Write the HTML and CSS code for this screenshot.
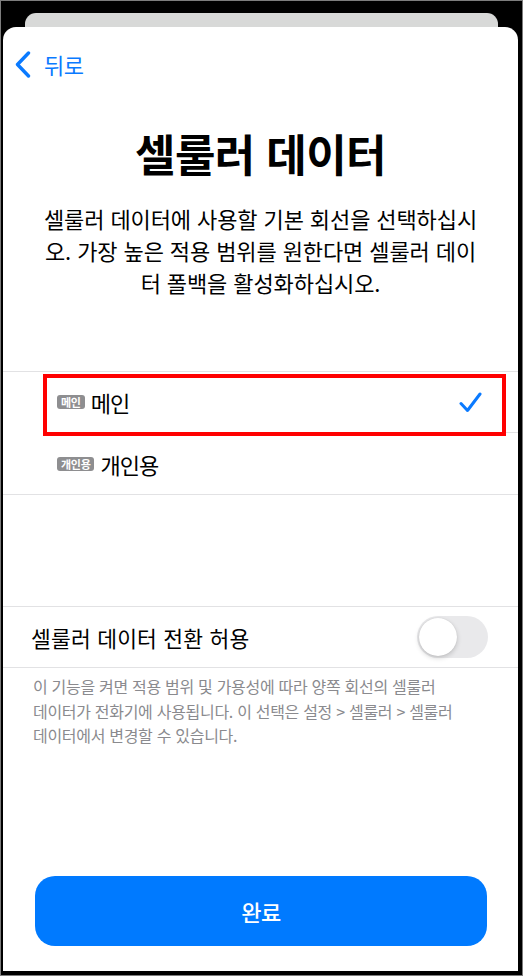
FILE: index.html
```html
<!DOCTYPE html>
<html lang="ko">
<head>
<meta charset="utf-8">
<link rel="stylesheet" href="styles.css">
</head>
<body>
<div class="frame">
  <div class="backcard"></div>
  <div class="sheet">
    <div class="nav">
      <svg class="chev" width="16" height="27" viewBox="0 0 16 27"><path d="M13.5 2 L2.5 13.5 L13.5 25" fill="none" stroke="#0a7aff" stroke-width="3.4" stroke-linecap="round" stroke-linejoin="round"/></svg>
      <span class="back">뒤로</span>
    </div>
    <h1 class="title">셀룰러 데이터</h1>
    <p class="desc">셀룰러 데이터에 사용할 기본 회선을 선택하십시<br>오. 가장 높은 적용 범위를 원한다면 셀룰러 데이<br>터 폴백을 활성화하십시오.</p>
    <div class="list">
      <div class="row">
        <div class="row-inner sep">
          <span class="badge">메인</span><span class="label">메인</span>
          <svg class="check" width="23" height="21" viewBox="0 0 23 21"><path d="M2 11.5 L8.5 18.5 L21 2" fill="none" stroke="#0a7aff" stroke-width="3" stroke-linecap="round" stroke-linejoin="round"/></svg>
        </div>
        <div class="highlight"></div>
      </div>
      <div class="row">
        <div class="row-inner">
          <span class="badge">개인용</span><span class="label">개인용</span>
        </div>
      </div>
    </div>
    <div class="toggle-row">
      <span class="toggle-label">셀룰러 데이터 전환 허용</span>
      <span class="switch"><span class="knob"></span></span>
    </div>
    <p class="note">이 기능을 켜면 적용 범위 및 가용성에 따라 양쪽 회선의 셀룰러<br>데이터가 전화기에 사용됩니다. 이 선택은 설정 &gt; 셀룰러 &gt; 셀룰러<br>데이터에서 변경할 수 있습니다.</p>
    <div class="done">완료</div>
  </div>
</div>
</body>
</html>
```
FILE: styles.css
```css
* { box-sizing: border-box; }
html, body { margin: 0; padding: 0; }
body {
  width: 523px;
  height: 976px;
  font-family: "Noto Sans CJK KR", "Noto Sans", sans-serif;
  background: #000;
}
.frame {
  width: 523px;
  height: 976px;
  border: 1px solid #7d7d7d;
  background: #000;
  padding: 12px 4px 4px 2px;
  display: flex;
  flex-direction: column;
}
.backcard {
  height: 14px;
  margin: 0 20px 0 22px;
  background: #d8d9d8;
  border-radius: 11px 11px 0 0;
  flex: none;
}
.sheet {
  flex: 1;
  background: #fff;
  border-radius: 13px 13px 0 0;
  display: flex;
  flex-direction: column;
}
.nav {
  height: 74px;
  display: flex;
  align-items: center;
  padding-left: 12px;
  flex: none;
}
.chev { display: block; }
.back {
  margin-left: 13px;
  font-size: 22px;
  color: #0a7aff;
  letter-spacing: -0.6px;
  line-height: 1;
}
.title {
  margin: 26px 0 0;
  font-size: 44px;
  line-height: 52px;
  font-weight: 700;
  text-align: center;
  letter-spacing: -0.6px;
  color: #000;
}
.desc {
  margin: 23px 0 0;
  font-size: 22px;
  line-height: 32px;
  text-align: center;
  letter-spacing: -0.1px;
  color: #000;
}
.list {
  margin-top: 73px;
  border-top: 1px solid #e2e2e4;
  border-bottom: 1px solid #e2e2e4;
}
.row {
  position: relative;
  padding-left: 54px;
}
.row-inner {
  height: 61px;
  display: flex;
  align-items: center;
  padding-right: 36px;
}
.row-inner.sep { border-bottom: 1px solid #e2e2e4; }
.badge {
  display: inline-block;
  height: 14px;
  line-height: 14px;
  padding: 0 4px;
  background: #8e8e90;
  color: #fff;
  font-size: 11px;
  font-weight: 700;
  border-radius: 3px;
  letter-spacing: -0.3px;
}
.label {
  margin-left: 6px;
  font-size: 22px;
  letter-spacing: -1px;
  color: #000;
}
.check { margin-left: auto; display: block; }
.highlight {
  position: absolute;
  left: 40px;
  top: 2px;
  width: 463px;
  height: 62px;
  border: 4px solid #ff0000;
}
.toggle-row {
  margin-top: 111px;
  height: 62px;
  border-top: 1px solid #e2e2e4;
  border-bottom: 1px solid #e2e2e4;
  display: flex;
  align-items: center;
  padding: 0 30px 0 28px;
}
.toggle-label {
  font-size: 21.5px;
  letter-spacing: 0.2px;
  color: #000;
}
.switch {
  margin-left: auto;
  width: 71px;
  height: 42px;
  border-radius: 21px;
  background: #e9e9eb;
  position: relative;
  display: block;
}
.knob {
  position: absolute;
  left: 2px;
  top: 2px;
  width: 38px;
  height: 38px;
  border-radius: 50%;
  background: #fff;
  box-shadow: 0 2px 5px rgba(0,0,0,0.18), 0 0 1px rgba(0,0,0,0.15);
}
.note {
  margin: 6px 0 0;
  padding-left: 30px;
  font-size: 16px;
  line-height: 24.5px;
  letter-spacing: -0.3px;
  color: #8a8a8e;
}
.done {
  margin: auto 31px 25px 32px;
  height: 70px;
  border-radius: 20px;
  background: #007aff;
  color: #fff;
  font-size: 22px;
  font-weight: 500;
  display: flex;
  align-items: center;
  justify-content: center;
  letter-spacing: -0.5px;
}
```
